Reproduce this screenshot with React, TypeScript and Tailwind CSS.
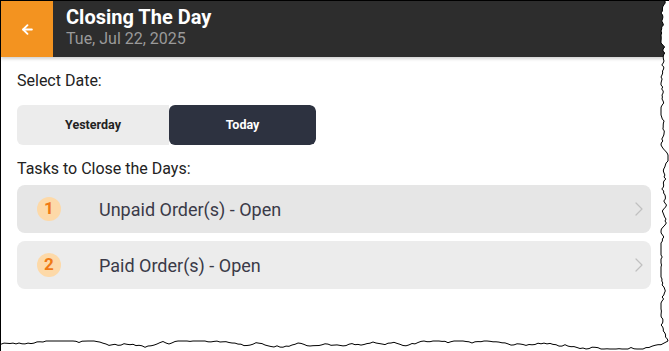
import { ArrowLeft, ChevronRight } from 'lucide-react';

const tasks = [
  { n: 1, label: 'Unpaid Order(s) - Open', bg: 'bg-[#e6e6e6]' },
  { n: 2, label: 'Paid Order(s) - Open', bg: 'bg-[#ececec]' },
];

// jagged torn edge along right + bottom of the screenshot
function tornEdge() {
  let seed = 7;
  const rnd = () => {
    seed = (seed * 9301 + 49297) % 233280;
    return seed / 233280;
  };
  const pts: string[] = [];
  let x = 664;
  for (let y = 0; y <= 340; y += 2) {
    x = Math.min(667, Math.max(660, x + (rnd() - 0.5) * 4));
    pts.push(`${x.toFixed(1)},${y}`);
  }
  let y = 344;
  for (let xx = 660; xx >= 0; xx -= 3) {
    y = Math.min(348, Math.max(340, y + (rnd() - 0.5) * 3));
    pts.push(`${xx},${y.toFixed(1)}`);
  }
  return pts;
}

const edge = tornEdge();

export default function App() {
  return (
    <div className="relative w-[669px] h-[351px] overflow-hidden bg-white border-l border-t border-black" style={{ fontFamily: 'Roboto, "Liberation Sans", sans-serif' }}>
      <header className="flex h-[56px] bg-[#2d2d2d] shadow-[0_2px_3px_rgba(0,0,0,0.18)] relative z-10">
        <div className="w-[52px] h-full bg-[#f39320] flex items-center justify-center">
          <ArrowLeft className="w-[15px] h-[15px] text-white" strokeWidth={3} />
        </div>
        <div className="pl-[13px] pt-[5px] flex flex-col">
          <div className="text-white font-bold text-[20px] leading-[23px]">Closing The Day</div>
          <div className="text-[#9a9a9a] text-[16px] leading-[19px]">Tue, Jul 22, 2025</div>
        </div>
      </header>

      <main className="pl-[16px] pr-[18px]">
        <div className="text-[16px] text-[#222] mt-[15px] leading-[18px]">Select Date:</div>
        <div className="flex mt-[15px] w-[299px] h-[40px] rounded-[6px] overflow-hidden">
          <button className="w-[152px] bg-[#ececec] text-[#222] text-[12.5px] font-bold">Yesterday</button>
          <button className="flex-1 bg-[#2d3240] text-white text-[12.5px] font-bold rounded-[6px]">Today</button>
        </div>
        <div className="text-[16px] text-[#222] mt-[15px] leading-[18px]">Tasks to Close the Days:</div>
        <div className="flex flex-col gap-[8px] mt-[7px]">
          {tasks.map(t => (
            <div key={t.n} className={`flex items-center h-[48px] rounded-[8px] ${t.bg}`}>
              <div className="ml-[20px] w-[24px] h-[24px] rounded-full bg-[#fdd9a8] text-[#f07a14] font-bold text-[17px] flex items-center justify-center">
                {t.n}
              </div>
              <div className="ml-[38px] text-[18px] text-[#3a3a48]">{t.label}</div>
              <ChevronRight className="ml-auto mr-0 w-[24px] h-[24px] text-[#c0c0c0]" strokeWidth={1.2} />
            </div>
          ))}
        </div>
      </main>

      <svg className="absolute left-0 top-0 z-20" width="669" height="351" viewBox="0 0 669 351">
        <path d={`M${edge[0]} L${edge.join(' L')} L0,351 L669,351 L669,0 Z`} fill="#fff" />
        <polyline points={edge.join(' ')} fill="none" stroke="#000" strokeWidth="1" />
      </svg>
    </div>
  );
}
